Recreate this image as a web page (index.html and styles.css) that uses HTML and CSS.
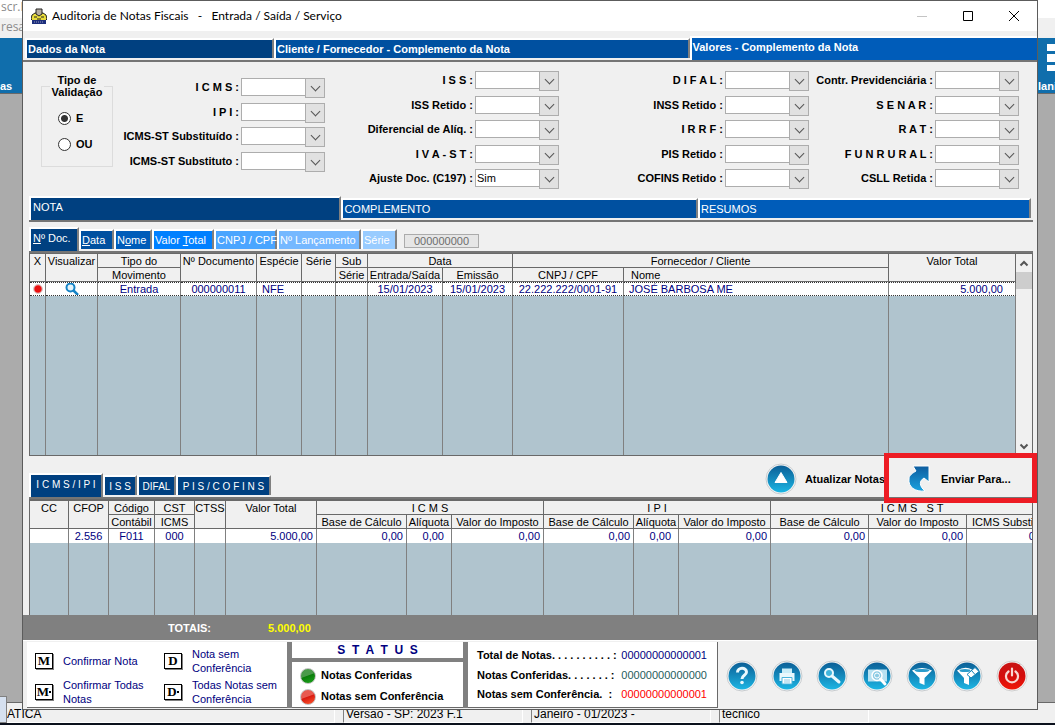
FILE: index.html
```html
<!DOCTYPE html>
<html lang="pt-BR">
<head>
    <meta charset="UTF-8">
    <meta name="viewport" content="width=device-width, initial-scale=1.0">
    <title>Auditoria de Notas Fiscais</title>
    <link rel="stylesheet" href="styles.css">
</head>
<body>

    <!-- Main application behind the window -->
    <div class="app">
        <div class="app-title">scr.P</div>
        <div class="app-menu">resa</div>
        <div class="app-ribbon">
            <span>as</span>
            <span class="ribbon-item">
                <svg class="ribbon-icon" width="8" height="30" viewBox="0 0 8 30"><path d="M0 1h8v7H0zM0 11h8v8H0zM0 22h8v6H0z" fill="#fff"/></svg>
                lani
            </span>
        </div>
        <div class="app-desktop"></div>
        <div class="app-status">
            <span class="status-cell first">ATICA</span>
            <span class="status-cell">Versão - SP: 2023 F.1</span>
            <span class="status-cell">Janeiro - 01/2023 -</span>
            <span class="status-cell last">tecnico</span>
        </div>
        <div class="taskbar"></div>
        <div class="float-edge"></div>
    </div>

    <main class="window">
        <header class="titlebar">
            <svg class="app-icon" width="16" height="16" viewBox="0 0 16 16">
                <path d="M1 7l3-2h8l3 2 1 4-2 2H2l-2-2z" fill="#e9dc3c" stroke="#222" />
                <path d="M5 1h6v5l-3 2-3-2z" fill="#b5aca0" stroke="#222"/>
                <path d="M3 9h3M10 9h3M6 11h4" stroke="#222"/>
                <path d="M1 12h14v4H1z" fill="#1d2f7d"/>
                <path d="M3 14h10" stroke="#9a9dc0" stroke-dasharray="1 1"/>
            </svg>
            <h1>Auditoria de Notas Fiscais   -   Entrada / Saída / Serviço</h1>
            <div class="window-buttons">
                <button type="button" aria-label="Minimizar"><svg width="10" height="10"><path d="M0 5.5h10" stroke="#c4c4c4"/></svg></button>
                <button type="button" aria-label="Maximizar"><svg width="10" height="10"><path d="M.5.5h9v9h-9z" fill="none" stroke="#000"/></svg></button>
                <button type="button" aria-label="Fechar"><svg width="10" height="10"><path d="M0 0l10 10M10 0L0 10" stroke="#000"/></svg></button>
            </div>
        </header>

        <nav class="tabs main-tabs">
            <button type="button" class="tab c1">Dados da Nota</button>
            <button type="button" class="tab c2">Cliente / Fornecedor - Complemento da Nota</button>
            <button type="button" class="tab c3 active">Valores - Complemento da Nota</button>
        </nav>

        <!-- Tax filters -->
        <form class="filters">
            <fieldset class="validation">
                <legend>Tipo de<br>Validação</legend>
                <label><input type="radio" name="tipo" checked> E</label>
                <label><input type="radio" name="tipo"> OU</label>
            </fieldset>
            <div class="filter-grid">
                <div class="filter-col short">
                    <div class="field"><label for="icms">I C M S :</label><span class="combo"><select id="icms"><option></option></select></span></div>
                    <div class="field"><label for="ipi">I P I :</label><span class="combo"><select id="ipi"><option></option></select></span></div>
                    <div class="field"><label for="st1">ICMS-ST Substituído :</label><span class="combo"><select id="st1"><option></option></select></span></div>
                    <div class="field"><label for="st2">ICMS-ST Substituto :</label><span class="combo"><select id="st2"><option></option></select></span></div>
                </div>
                <div class="filter-col">
                    <div class="field"><label for="iss">I S S :</label><span class="combo"><select id="iss"><option></option></select></span></div>
                    <div class="field"><label for="issret">ISS Retido :</label><span class="combo"><select id="issret"><option></option></select></span></div>
                    <div class="field"><label for="difaliq">Diferencial de Alíq. :</label><span class="combo"><select id="difaliq"><option></option></select></span></div>
                    <div class="field"><label for="iva">I V A - S T :</label><span class="combo"><select id="iva"><option></option></select></span></div>
                    <div class="field"><label for="ajuste">Ajuste Doc. (C197) :</label><span class="combo"><select id="ajuste"><option>Sim</option></select></span></div>
                </div>
                <div class="filter-col">
                    <div class="field"><label for="difal">D I F A L :</label><span class="combo"><select id="difal"><option></option></select></span></div>
                    <div class="field"><label for="inss">INSS Retido :</label><span class="combo"><select id="inss"><option></option></select></span></div>
                    <div class="field"><label for="irrf">I R R F :</label><span class="combo"><select id="irrf"><option></option></select></span></div>
                    <div class="field"><label for="pis">PIS Retido :</label><span class="combo"><select id="pis"><option></option></select></span></div>
                    <div class="field"><label for="cofins">COFINS Retido :</label><span class="combo"><select id="cofins"><option></option></select></span></div>
                </div>
                <div class="filter-col">
                    <div class="field"><label for="prev">Contr. Previdenciária :</label><span class="combo"><select id="prev"><option></option></select></span></div>
                    <div class="field"><label for="senar">S E N A R :</label><span class="combo"><select id="senar"><option></option></select></span></div>
                    <div class="field"><label for="rat">R A T :</label><span class="combo"><select id="rat"><option></option></select></span></div>
                    <div class="field"><label for="funrural">F U N R U R A L :</label><span class="combo"><select id="funrural"><option></option></select></span></div>
                    <div class="field"><label for="csll">CSLL Retida :</label><span class="combo"><select id="csll"><option></option></select></span></div>
                </div>
            </div>
        </form>

        <nav class="tabs note-tabs">
            <button type="button" class="tab c1 active">NOTA</button>
            <button type="button" class="tab c2">COMPLEMENTO</button>
            <button type="button" class="tab c3">RESUMOS</button>
        </nav>

        <div class="tabs sort-tabs">
            <button type="button" class="tab c1 active"><u>N</u>º Doc.</button>
            <button type="button" class="tab c2"><u>D</u>ata</button>
            <button type="button" class="tab c3">N<u>o</u>me</button>
            <button type="button" class="tab c4">Valor <u>T</u>otal</button>
            <button type="button" class="tab c5">CNPJ / CPF</button>
            <button type="button" class="tab c6">Nº Lançamento</button>
            <button type="button" class="tab c7">Série</button>
            <input class="search" type="text" value="000000000" aria-label="Localizar" disabled>
        </div>

        <!-- Invoices -->
        <div class="grid">
            <table class="notes">
                <colgroup>
                    <col class="w16"><col class="w52"><col class="w83"><col class="w76"><col class="w45"><col class="w34"><col class="w32"><col class="w75"><col class="w70"><col class="w111"><col><col class="w127">
                </colgroup>
                <thead>
                    <tr>
                        <th rowspan="2">X</th>
                        <th rowspan="2">Visualizar</th>
                        <th>Tipo do</th>
                        <th rowspan="2">Nº Documento</th>
                        <th rowspan="2">Espécie</th>
                        <th rowspan="2">Série</th>
                        <th>Sub</th>
                        <th colspan="2">Data</th>
                        <th colspan="2">Fornecedor / Cliente</th>
                        <th rowspan="2">Valor Total</th>
                    </tr>
                    <tr>
                        <th>Movimento</th>
                        <th>Série</th>
                        <th>Entrada/Saída</th>
                        <th>Emissão</th>
                        <th>CNPJ / CPF</th>
                        <th class="left">Nome</th>
                    </tr>
                </thead>
                <tbody>
                    <tr class="selected">
                        <td><span class="dot"></span></td>
                        <td><svg class="lens" width="14" height="14" viewBox="0 0 14 14"><circle cx="5.500" cy="5.500" r="4" fill="#e4f4fb" stroke="#1583c6" stroke-width="2"/><path d="M8.500 8.500l4.500 4.500" stroke="#1583c6" stroke-width="2.500"/></svg></td>
                        <td>Entrada</td>
                        <td>000000011</td>
                        <td class="left">NFE</td>
                        <td></td>
                        <td></td>
                        <td>15/01/2023</td>
                        <td>15/01/2023</td>
                        <td>22.222.222/0001-91</td>
                        <td class="left">JOSÉ BARBOSA ME</td>
                        <td class="money">5.000,00</td>
                    </tr>
                    <tr class="filler"><td></td><td></td><td></td><td></td><td></td><td></td><td></td><td></td><td></td><td></td><td></td><td></td></tr>
                </tbody>
            </table>
            <div class="scrollbar">
                <svg width="16" height="18" viewBox="0 0 16 18"><path d="M4.500 11.500L8 8l3.500 3.500" fill="none" stroke="#555" stroke-width="2"/></svg>
                <span class="thumb"></span>
                <svg class="down" width="16" height="18" viewBox="0 0 16 18"><path d="M4.500 7.500L8 11l3.500-3.500" fill="none" stroke="#555" stroke-width="2"/></svg>
            </div>
        </div>

        <div class="tabs tax-tabs">
            <button type="button" class="tab c1 t1 active">I C M S / I P I</button>
            <button type="button" class="tab c1 t2">I S S</button>
            <button type="button" class="tab c1 t3">DIFAL</button>
            <button type="button" class="tab c1 t4">P I S / C O F I N S</button>
            <div class="actions">
                <button type="button" class="action update">
                    <svg width="32" height="32" viewBox="0 0 32 32"><use href="#ball"/><path d="M16 9.500l6 10H10z" fill="#fff" stroke="#fff" stroke-linejoin="round"/></svg>
                    Atualizar Notas
                </button>
                <button type="button" class="action send">
                    <svg width="24" height="28" viewBox="0 0 24 28"><path d="M6 1h16v16l-5-4c-5 3-5 8 1 13C8 27 1 22 2 14c0-4 4-6 7-8z" fill="url(#arrow)" stroke="#fff" stroke-width="1"/></svg>
                    Enviar Para...
                </button>
            </div>
        </div>

        <!-- Taxes of the selected invoice -->
        <div class="grid tax-grid">
            <table class="taxes">
                <colgroup>
                    <col class="w39"><col class="w40"><col class="w46"><col class="w40"><col class="w31"><col class="w91"><col class="w90"><col class="w45"><col class="w92"><col class="w90"><col class="w45"><col class="w92"><col class="w98"><col class="w98"><col class="w87">
                </colgroup>
                <thead>
                    <tr>
                        <th rowspan="2">CC</th>
                        <th rowspan="2">CFOP</th>
                        <th>Código</th>
                        <th>CST</th>
                        <th rowspan="2">CTSS</th>
                        <th rowspan="2">Valor Total</th>
                        <th colspan="3">I C M S</th>
                        <th colspan="3">I P I</th>
                        <th colspan="3">I C M S   S T</th>
                    </tr>
                    <tr>
                        <th>Contábil</th>
                        <th>ICMS</th>
                        <th>Base de Cálculo</th>
                        <th>Alíquota</th>
                        <th>Valor do Imposto</th>
                        <th>Base de Cálculo</th>
                        <th>Alíquota</th>
                        <th>Valor do Imposto</th>
                        <th>Base de Cálculo</th>
                        <th>Valor do Imposto</th>
                        <th class="left">ICMS Substituto</th>
                    </tr>
                </thead>
                <tbody>
                    <tr>
                        <td></td>
                        <td>2.556</td>
                        <td>F011</td>
                        <td>000</td>
                        <td></td>
                        <td class="num">5.000,00</td>
                        <td class="num">0,00</td>
                        <td class="num rate">0,00</td>
                        <td class="num">0,00</td>
                        <td class="num">0,00</td>
                        <td class="num rate">0,00</td>
                        <td class="num">0,00</td>
                        <td class="num">0,00</td>
                        <td class="num">0,00</td>
                        <td class="num">0,00</td>
                    </tr>
                    <tr class="filler"><td></td><td></td><td></td><td></td><td></td><td></td><td></td><td></td><td></td><td></td><td></td><td></td><td></td><td></td><td></td></tr>
                </tbody>
            </table>
        </div>

        <div class="totals">
            <span>TOTAIS:</span>
            <strong>5.000,00</strong>
        </div>

        <footer class="footer">
            <div class="legend">
                <button type="button"><kbd>M</kbd><span>Confirmar Nota</span></button>
                <button type="button"><kbd>D</kbd><span>Nota sem Conferência</span></button>
                <button type="button"><kbd>M<i></i></kbd><span>Confirmar Todas Notas</span></button>
                <button type="button"><kbd>D<i></i></kbd><span>Todas Notas sem Conferência</span></button>
            </div>
            <div class="status">
                <h2>S  T  A  T  U  S</h2>
                <ul>
                    <li><span class="light green"></span>Notas Conferidas</li>
                    <li><span class="light red"></span>Notas sem Conferência</li>
                </ul>
            </div>
            <dl class="counts">
                <div><dt>Total de Notas. . . . . . . . . . :</dt><dd class="navy">00000000000001</dd></div>
                <div><dt>Notas Conferidas. . . . . . . :</dt><dd class="teal">00000000000000</dd></div>
                <div><dt>Notas sem Conferência.  :</dt><dd class="red">00000000000001</dd></div>
            </dl>
            <div class="tools">
                <button type="button" aria-label="Ajuda"><svg width="32" height="32" viewBox="0 0 32 32"><use href="#ball"/><path d="M11.500 12.500c0-5.500 9-5.500 9-.5 0 3.500-4.500 3-4.500 7" fill="none" stroke="#e8f8fd" stroke-width="3"/><circle cx="16" cy="22.500" r="1.800" fill="#e8f8fd"/></svg></button>
                <button type="button" aria-label="Imprimir"><svg width="32" height="32" viewBox="0 0 32 32"><use href="#ball"/><path d="M11 8.500h10V13H11z" fill="#c9edf8"/><path d="M8.500 13h15v8h-15z" fill="#e8f8fd"/><path d="M11 17.500h10v6.500H11z" fill="#fff" stroke="#4ab4dc"/><path d="M13 20h6M13 22h6" stroke="#8fcbe4"/></svg></button>
                <button type="button" aria-label="Pesquisar"><svg width="32" height="32" viewBox="0 0 32 32"><use href="#ball"/><circle cx="13" cy="13" r="4" fill="#41b5dc" stroke="#e8f8fd" stroke-width="2"/><path d="M16 16l7 6" stroke="#e8f8fd" stroke-width="3" stroke-linecap="round"/></svg></button>
                <button type="button" aria-label="Consultar nota"><svg width="32" height="32" viewBox="0 0 32 32"><use href="#ball"/><path d="M7 9.500h19v12H7z" fill="#b7e1f1"/><circle cx="16" cy="15.500" r="5" fill="#8ccbe4" stroke="#fff" stroke-width="1.500"/><circle cx="16" cy="15.500" r="2.500" fill="none" stroke="#fff"/><path d="M19.500 19l4.500 5" stroke="#fff" stroke-width="3" stroke-linecap="round"/></svg></button>
                <button type="button" aria-label="Filtrar"><svg width="32" height="32" viewBox="0 0 32 32"><use href="#ball"/><path d="M6 10.500q10-5 20 0L18.500 18v7l-5-2v-5z" fill="#fff"/><ellipse cx="16" cy="10.500" rx="7.500" ry="1.600" fill="#2b9ccb"/></svg></button>
                <button type="button" aria-label="Limpar filtro"><svg width="32" height="32" viewBox="0 0 32 32"><use href="#ball"/><path d="M6 10.500q8-5 15-1l-3 8.500v7l-5-2v-5z" fill="#fff"/><ellipse cx="14" cy="10.500" rx="5.500" ry="1.500" fill="#2b9ccb"/><path d="M16 14.500l8-7 4 4-8 6.500z" fill="#fff" stroke="#1582b6"/><path d="M20.500 10.500l3.500 4" stroke="#1582b6"/></svg></button>
                <button type="button" aria-label="Sair"><svg width="32" height="32" viewBox="0 0 32 32"><circle cx="16" cy="16" r="15" fill="#f6f6f6" stroke="#cfcfcf"/><circle cx="16" cy="16" r="13.500" fill="url(#redball)"/><path d="M12.500 11.500a6 6 0 1 0 7 0M16 8.500v7" fill="none" stroke="#f9d7d2" stroke-width="2.200" stroke-linecap="round"/></svg></button>
            </div>
        </footer>
    </main>

    <!-- Shared icon parts -->
    <svg class="defs" width="0" height="0" aria-hidden="true">
        <defs>
            <linearGradient id="blueball" x1="0" y1="0" x2="0" y2="1">
                <stop offset="0" stop-color="#0b5f97"/>
                <stop offset=".45" stop-color="#1385b8"/>
                <stop offset="1" stop-color="#1cb6e4"/>
            </linearGradient>
            <linearGradient id="redball" x1="0" y1="0" x2="0" y2="1">
                <stop offset="0" stop-color="#c81414"/>
                <stop offset=".5" stop-color="#d40c0c"/>
                <stop offset="1" stop-color="#f01808"/>
            </linearGradient>
            <linearGradient id="arrow" x1="0" y1="0" x2="0" y2="1">
                <stop offset="0" stop-color="#0d5c9e"/>
                <stop offset="1" stop-color="#1ba3e0"/>
            </linearGradient>
            <g id="ball">
                <circle cx="16" cy="16" r="15" fill="#f6f6f6" stroke="#c8cccf"/>
                <circle cx="16" cy="16" r="13.500" fill="url(#blueball)"/>
            </g>
        </defs>
    </svg>

</body>
</html>
```

FILE: styles.css
```css
* {
    margin: 0;
    padding: 0;
    box-sizing: border-box;
}

body {
    font-family: "Liberation Sans", Arial, sans-serif;
    font-size: 11px;
    line-height: 13px;
    color: #000;
    background: #ababab;
}

button, input, select {
    font: inherit;
    color: inherit;
    border: none;
    background: none;
}

svg {
    display: block;
}

/* Application behind the window */
.app {
    display: flex;
    flex-direction: column;
    min-height: 100vh;
    position: relative;
    overflow: hidden;
}

.app-title, .app-menu {
    font-family: "Open Sans", sans-serif;
    font-size: 12px;
    color: #8c8c8c;
    padding-left: 1px;
}

.app-title {
    height: 18px;
    background: #fff;
}

.app-menu {
    height: 20px;
    padding-top: 2px;
    background: #f0f0f0;
}

.app-ribbon {
    display: flex;
    justify-content: space-between;
    align-items: flex-end;
    height: 56px;
    background: #106eac;
    border-bottom: 1px solid #696969;
    color: #fff;
    font-weight: bold;
}

.ribbon-item {
    width: 17px;
}

.ribbon-icon {
    margin: 0 0 7px 9px;
}

.app-desktop {
    flex: 1;
}

.app-status {
    display: flex;
    gap: 8px;
    height: 21px;
    border-top: 1px solid #696969;
    background: #f0f0f0;
    font-size: 12px;
}

.status-cell {
    width: 180px;
    padding: 5px 0 0 2px;
    border-left: 1px solid #808080;
    border-right: 1px solid #fff;
    border-bottom: 1px solid #fff;
}

.status-cell.first {
    width: 335px;
    padding-left: 6px;
}

.status-cell.last {
    width: 150px;
}

.taskbar {
    height: 2px;
    background: #0b111c;
}

.float-edge {
    position: absolute;
    left: 0;
    bottom: 2px;
    width: 7px;
    height: 27px;
    background: #d6e1f0;
    border: 1px solid #808080;
    border-left: none;
}

/* Window */
.window {
    position: absolute;
    top: 0;
    left: 22px;
    right: 17px;
    background: #f0f0f0;
    border: 1px solid #5c5c5c;
}

.titlebar {
    display: flex;
    align-items: center;
    height: 30px;
    padding-left: 8px;
    background: #fff;
}

.titlebar h1 {
    flex: 1;
    margin-left: 5px;
    font: 12px/16px Lato, sans-serif;
    white-space: pre;
}

.window-buttons {
    display: flex;
}

.window-buttons button {
    display: flex;
    align-items: center;
    justify-content: center;
    width: 46px;
    height: 29px;
}

/* Tabs */
.tabs {
    display: flex;
    align-items: flex-end;
    height: 26px;
    border-bottom: 2px solid #757575;
}

.tab {
    height: 20px;
    margin-bottom: 2px;
    padding: 0 1px;
    border-top: 2px solid #fff;
    border-left: 2px solid #fff;
    border-right: 2px solid #808080;
    color: #fff;
    text-align: left;
    white-space: pre;
}

.tab.active {
    height: 24px;
    margin-bottom: 0;
    padding-bottom: 4px;
}

.c1 { background: #004080; }
.c2 { background: #0050a0; }
.c3 { background: #005cb9; }
.c4 { background: #0080ff; }
.c5 { background: #4aa5ff; }
.c6 { background: #75b8ff; }
.c7 { background: #99ccff; }

.main-tabs {
    margin-top: 5px;
    padding-left: 2px;
    font-weight: bold;
}

.main-tabs .c1 { flex: 247; }
.main-tabs .c2 { flex: 416; }
.main-tabs .c3 { flex: 349; border-right: none; }

.note-tabs, .sort-tabs, .tax-tabs {
    margin: 0 4px 0 6px;
}

.note-tabs .c1 { flex: 311; }
.note-tabs .c2 { flex: 357; }
.note-tabs .c3 { flex: 333; }

.note-tabs {
    padding-right: 2px;
}

.sort-tabs {
    margin-top: 5px;
}

.note-tabs .active, .sort-tabs .active {
    padding-left: 2px;
}

.sort-tabs .c1 { width: 50px; }
.sort-tabs .c2 { width: 35px; }
.sort-tabs .c3 { width: 38px; }
.sort-tabs .c4 { width: 62px; }
.sort-tabs .c5 { width: 63px; }
.sort-tabs .c6 { width: 84px; }
.sort-tabs .c7 { width: 36px; }

.search {
    width: 75px;
    height: 14px;
    margin: 0 0 3px 7px;
    border: 1px solid #ababab;
    background: #e6e6e6;
    color: #6d6d6d;
    text-align: center;
}

/* Filters */
.filters {
    display: flex;
    padding: 9px 18px 9px 18px;
}

.validation {
    width: 72px;
    height: 93px;
    margin-top: 3px;
    border: 1px solid #dcdcdc;
    font-weight: bold;
}

.validation legend {
    margin: 0 auto;
    padding: 0 2px;
    text-align: center;
    line-height: 12px;
}

.validation label {
    display: flex;
    align-items: center;
    gap: 5px;
    margin: 0 0 13px 16px;
}

.validation legend + label {
    margin-top: 14px;
}

.validation input {
    appearance: none;
    width: 13px;
    height: 13px;
    border: 1px solid #333;
    border-radius: 50%;
    background: #fff;
}

.validation input:checked {
    background: radial-gradient(circle, #333 3px, #fff 4px);
}

.filter-grid {
    flex: 1;
    display: grid;
    grid-template-columns: 212fr 234fr 250fr 210fr;
}

.filter-col.short {
    margin-top: 7px;
}

.field {
    display: flex;
    align-items: center;
    justify-content: flex-end;
    gap: 2px;
    margin-bottom: 7px;
    font-weight: bold;
    white-space: pre;
}

.field:nth-child(even) {
    margin-bottom: 6px;
}

.field:last-child {
    margin-bottom: 0;
}

.combo {
    position: relative;
    width: 84px;
    height: 18px;
}

.combo select {
    appearance: none;
    display: block;
    width: 100%;
    height: 18px;
    padding: 0 18px 0 1px;
    border: 1px solid #adadad;
    background: #fff;
    font-weight: normal;
}

.combo::before {
    content: "";
    position: absolute;
    top: 0;
    right: 0;
    width: 18px;
    height: 18px;
    border: 1px solid #adadad;
    background: #e1e1e1;
    pointer-events: none;
}

.combo::after {
    content: "";
    position: absolute;
    top: 5px;
    right: 6px;
    width: 6px;
    height: 6px;
    border-right: 1px solid #555;
    border-bottom: 1px solid #555;
    transform: rotate(45deg);
    pointer-events: none;
}

/* Data grids */
.grid {
    display: flex;
    margin: 0 4px 0 6px;
    border: 1px solid #696969;
    background: #b0c4ce;
    overflow: hidden;
}

table {
    table-layout: fixed;
    border-spacing: 0;
    width: 100%;
}

th, td {
    height: 14px;
    line-height: 11px;
    padding-top: 2px;
    text-align: center;
    vertical-align: top;
    white-space: pre;
    overflow: hidden;
    border-right: 1px solid #808080;
}

th {
    font-weight: normal;
    background: #f0f0f0;
    border-bottom: 1px solid #696969;
    border-right-color: #696969;
}

td {
    background: #fff;
    color: #000080;
}

.filler td {
    height: 159px;
    background: #b0c4ce;
}

.selected td {
    padding-top: 0;
    border-top: 1px dotted #333;
    border-bottom: 1px dotted #333;
    line-height: 12px;
}

.left {
    text-align: left;
    padding-left: 5px;
}

.notes th.left {
    padding-left: 7px;
}

.num {
    text-align: right;
    padding-right: 3px;
}

.rate {
    padding-right: 7px;
}

.money {
    text-align: right;
    padding-right: 12px;
}

.notes {
    flex: 1;
}

.w16 { width: 16px; }
.w31 { width: 31px; }
.w32 { width: 32px; }
.w34 { width: 34px; }
.w39 { width: 39px; }
.w40 { width: 40px; }
.w45 { width: 45px; }
.w46 { width: 46px; }
.w52 { width: 52px; }
.w70 { width: 70px; }
.w75 { width: 75px; }
.w76 { width: 76px; }
.w83 { width: 83px; }
.w87 { width: 87px; }
.w90 { width: 90px; }
.w91 { width: 91px; }
.w92 { width: 92px; }
.w98 { width: 98px; }
.w111 { width: 111px; }
.w127 { width: 127px; }

.dot {
    display: block;
    width: 10px;
    height: 10px;
    margin: 1px auto;
    border-radius: 50%;
    border: 1px solid #d9c4c4;
    background: radial-gradient(circle, #e81010 3px, #f3dada 5px);
}

.lens {
    margin: -1px auto;
}

.scrollbar {
    display: flex;
    flex-direction: column;
    width: 16px;
    background: #f0f0f0;
}

.scrollbar .thumb {
    height: 17px;
    background: #cdcdcd;
}

.scrollbar .down {
    margin-top: auto;
}

.tax-tabs {
    margin-top: 17px;
}

.tax-tabs .tab {
    font-size: 10px;
    text-align: center;
}

.tax-tabs .t1 { width: 74px; }
.tax-tabs .t2 { width: 34px; }
.tax-tabs .t3 { width: 39px; }
.tax-tabs .t4 { width: 95px; }

.actions {
    display: flex;
    align-items: center;
    margin: 0 0 2px auto;
}

.action {
    position: relative;
    display: flex;
    align-items: center;
    gap: 8px;
    height: 32px;
    font-weight: bold;
    white-space: nowrap;
}

.send {
    width: 148px;
    padding-left: 22px;
    gap: 10px;
}

/* Highlight frame around the send button */
.send::after {
    content: "";
    position: absolute;
    inset: -10px -4px -8px -1px;
    border: 5px solid #ed1c24;
}

.tax-grid {
    border-top-width: 2px;
    border-bottom: none;
}

.taxes {
    flex: none;
    width: 1024px;
}

.taxes .filler td {
    height: 72px;
}

.totals {
    display: flex;
    align-items: center;
    gap: 57px;
    height: 25px;
    padding: 1px 0 0 145px;
    background: #808080;
    color: #fff;
    font-weight: bold;
}

.totals strong {
    color: #ff0;
}

/* Footer */
.footer {
    display: flex;
    height: 69px;
    padding: 1px 0 1px 4px;
    border-top: 1px solid #fff;
}

.legend {
    flex: none;
    display: grid;
    grid-template-columns: 129px 120px;
    align-content: space-around;
    width: 260px;
    padding: 3px 0 0 8px;
    background: #fff;
    border-bottom: 1px solid #696969;
}

.legend button {
    display: flex;
    align-items: center;
    gap: 10px;
    color: #000080;
    text-align: left;
    line-height: 14px;
}

.legend kbd {
    position: relative;
    flex: none;
    width: 18px;
    height: 16px;
    border: 1px solid #000;
    box-shadow: 1px 1px 0 #808080;
    color: #000;
    font: bold 13px/14px "Liberation Serif", serif;
    text-align: center;
}

.legend kbd i {
    display: inline-block;
    width: 2px;
    height: 2px;
    margin-bottom: 3px;
    background: #000;
}

.status {
    flex: none;
    display: flex;
    flex-direction: column;
    width: 181px;
    border: solid #808080;
    border-width: 0 5px;
}

.status h2 {
    height: 20px;
    border-bottom: 4px solid #808080;
    background: #fff;
    color: #000080;
    font-size: 12px;
    line-height: 17px;
    text-align: center;
    white-space: pre;
}

.status ul {
    flex: 1;
    display: flex;
    flex-direction: column;
    justify-content: space-around;
    padding-top: 3px;
    list-style: none;
    background: #fff;
    border-bottom: 1px solid #696969;
    font-weight: bold;
}

.status li {
    display: flex;
    align-items: center;
    gap: 5px;
    padding-left: 8px;
}

.light {
    width: 16px;
    height: 16px;
    border-radius: 50%;
    border: 1px solid #c4c4c4;
}

.light.green {
    background: linear-gradient(160deg, #4a9a4a 0 45%, #0a7d0a 50%, #1fa51f);
}

.light.red {
    background: linear-gradient(160deg, #e85a50 0 45%, #d81a10 50%, #ff5a30);
}

.counts {
    flex: none;
    display: flex;
    flex-direction: column;
    justify-content: space-evenly;
    width: 250px;
    padding: 1px 10px 0 9px;
    background: #fff;
    border-right: 1px solid #696969;
    border-bottom: 1px solid #696969;
}

.counts div {
    display: flex;
    justify-content: space-between;
    white-space: pre;
}

.counts dt {
    font-weight: bold;
}

.navy { color: #000080; }
.teal { color: #1f5c5c; }
.counts .red { color: #f00; }

.tools {
    flex: 1;
    display: flex;
    align-items: center;
    justify-content: space-between;
    padding: 1px 9px 0 8px;
}
```
